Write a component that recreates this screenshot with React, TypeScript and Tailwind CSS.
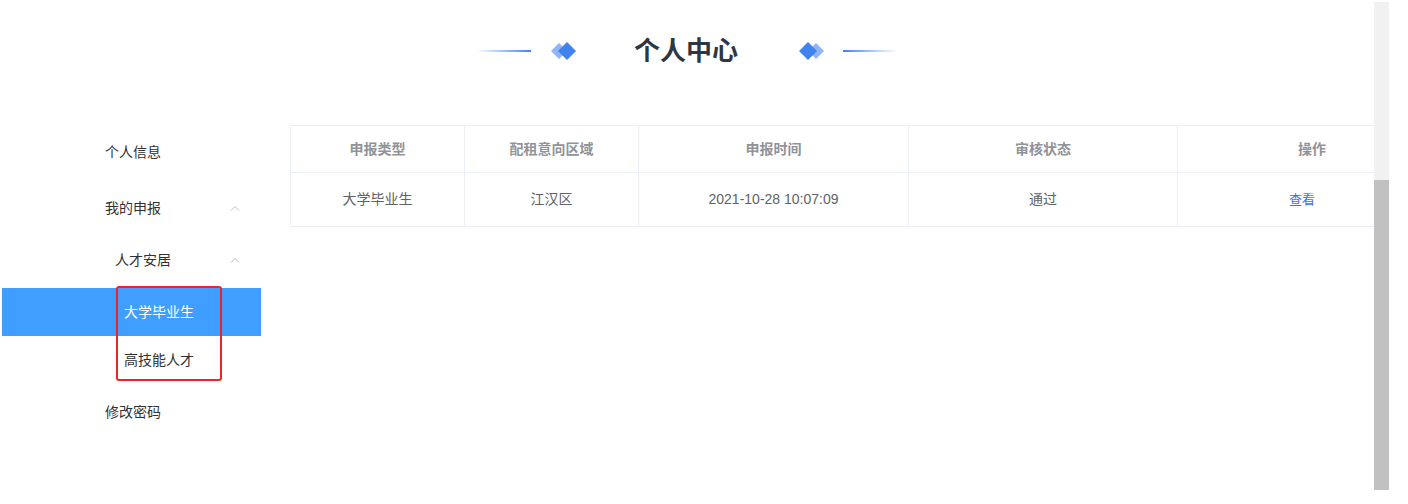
import React from 'react';

const FONT = '"Liberation Sans", "Noto Sans CJK SC", sans-serif';

function Diamonds({ flip }: { flip?: boolean }) {
  return (
    <svg width="26" height="20" viewBox="0 0 26 20" className={flip ? '-scale-x-100' : ''}>
      <path d="M8 2 L16 10 L8 18 L0 10 Z" fill="#8fb4f7" />
      <path d="M16 1 L25 10 L16 19 L7 10 Z" fill="#3f82f0" />
    </svg>
  );
}

function Caret() {
  return (
    <svg width="10" height="6" viewBox="0 0 10 6" className="text-[#b8bcc4]">
      <path d="M1 5.5 L5 1.5 L9 5.5" fill="none" stroke="currentColor" strokeWidth="1" />
    </svg>
  );
}

const cols = [
  { key: 'type', title: '申报类型', w: 'w-[174px]' },
  { key: 'area', title: '配租意向区域', w: 'w-[174px]' },
  { key: 'time', title: '申报时间', w: 'w-[270px]' },
  { key: 'status', title: '审核状态', w: 'w-[269px]' },
  { key: 'op', title: '操作', w: 'w-[269px]' },
];

const rows = [{ type: '大学毕业生', area: '江汉区', time: '2021-10-28 10:07:09', status: '通过' }];

export default function App() {
  return (
    <div className="flex h-[504px] w-[1408px] bg-white" style={{ fontFamily: FONT }}>
      <div className="w-[1374px] overflow-hidden">
        {/* 标题 */}
        <div className="flex h-[100px] items-center justify-center pt-[1px]">
          <div className="h-[2px] w-[55px] bg-gradient-to-r from-[#ffffff] to-[#3f82f0]" />
          <div className="ml-5">
            <Diamonds />
          </div>
          <h1 className="ml-[57px] mr-[60px] text-[26px] font-bold leading-none tracking-[0px] text-[#2d3643]">个人中心</h1>
          <Diamonds flip />
          <div className="ml-[19px] h-[2px] w-[55px] bg-gradient-to-r from-[#3f82f0] to-[#ffffff]" />
        </div>

        <div className="flex pt-[24px]">
          {/* 左侧菜单 */}
          <div className="relative w-[261px] shrink-0 text-[14px] text-[#303133]">
            <div className="flex h-[56px] items-center pl-[105px]">个人信息</div>
            <div className="flex h-[56px] items-center pl-[105px]">
              <span>我的申报</span>
              <span className="ml-[69px] flex">
                <Caret />
              </span>
            </div>
            <div className="flex h-[48px] items-center pl-[115px]">
              <span>人才安居</span>
              <span className="ml-[59px] flex">
                <Caret />
              </span>
            </div>
            <div className="ml-[2px] mt-[4px] flex h-[48px] items-center bg-[#409eff] pl-[122px] text-white">大学毕业生</div>
            <div className="flex h-[48px] items-center pl-[124px]">高技能人才</div>
            <div className="flex h-[56px] items-center pl-[105px]">修改密码</div>
            <div className="pointer-events-none absolute left-[116px] top-[162px] h-[95px] w-[106px] rounded-[3px] border-2 border-[#e8262a]" />
          </div>

          {/* 表格 */}
          <div className="ml-[29px] mt-[1px]">
            <table className="w-[1156px] table-fixed border-collapse text-[14px]">
              <thead>
                <tr className="h-[47px]">
                  {cols.map((c) => (
                    <th key={c.key} className={`${c.w} border border-[#ebeef5] font-bold text-[#909399]`}>
                      {c.title}
                    </th>
                  ))}
                </tr>
              </thead>
              <tbody>
                {rows.map((r) => (
                  <tr key={r.time} className="h-[54px] text-center text-[#606266]">
                    <td className="border border-[#ebeef5]">{r.type}</td>
                    <td className="border border-[#ebeef5]">{r.area}</td>
                    <td className="border border-[#ebeef5]">{r.time}</td>
                    <td className="border border-[#ebeef5]">{r.status}</td>
                    <td className="border border-[#ebeef5] pr-5 text-[13px] text-[#3f72e0]">查看</td>
                  </tr>
                ))}
              </tbody>
            </table>
          </div>
        </div>
      </div>

      {/* 滚动条 */}
      <div className="mt-[2px] flex h-[488px] w-[15px] flex-col bg-[#f1f1f1]">
        <div className="mt-[178px] flex-1 bg-[#c1c1c1]" />
      </div>
    </div>
  );
}
